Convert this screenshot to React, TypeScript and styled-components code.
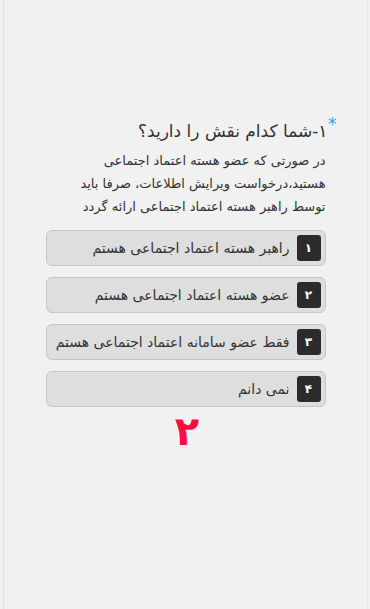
import styled, { createGlobalStyle } from 'styled-components';

const GlobalStyle = createGlobalStyle`
  html, body {
    margin: 0;
    padding: 0;
    background: #f1f1f1;
  }
  body {
    font-family: "DejaVu Sans", "Noto Sans", sans-serif;
  }
`;

const Frame = styled.div`
  box-sizing: border-box;
  margin: 0 2px 0 3px;
  min-height: 609px;
  border-left: 1px solid #e2e2e2;
  border-right: 1px solid #e8e8e8;
  background: #f1f1f1;
  display: flex;
  justify-content: center;
`;

const Question = styled.div`
  direction: rtl;
  width: 280px;
  padding-top: 118px;
  display: flex;
  flex-direction: column;
`;

const Title = styled.h2`
  position: relative;
  margin: 0 -2px 0 0;
  font-size: 17px;
  font-weight: normal;
  color: #333;
  line-height: 26px;
`;

const Required = styled.span`
  position: absolute;
  right: -9px;
  top: -7px;
  color: #2aa7dc;
  font-size: 17px;
`;

const Description = styled.p`
  margin: 5px 0 0 0;
  font-size: 13px;
  line-height: 23px;
  color: #333;
`;

const Options = styled.div`
  margin-top: 12px;
  display: flex;
  flex-direction: column;
  gap: 11px;
`;

const Option = styled.button`
  direction: rtl;
  box-sizing: border-box;
  height: 36px;
  display: flex;
  align-items: center;
  gap: 7px;
  padding: 0 4px 0 8px;
  background: #dedede;
  border: 1px solid #c6c6c6;
  border-radius: 6px;
  font-family: inherit;
  font-size: 14px;
  color: #333;
  text-align: right;
  cursor: pointer;
`;

const Badge = styled.span`
  flex: none;
  width: 24px;
  height: 26px;
  border-radius: 3px;
  background: #2b2b2b;
  color: #fff;
  font-size: 12px;
  font-weight: bold;
  display: flex;
  align-items: center;
  justify-content: center;
`;

const Step = styled.div`
  margin-top: 0;
  text-align: center;
  color: #ff0a3c;
  font-size: 40px;
  font-weight: bold;
  line-height: 48px;
  padding-left: 3px;
`;

const options = [
  { key: '۱', label: 'راهبر هسته اعتماد اجتماعی هستم' },
  { key: '۲', label: 'عضو هسته اعتماد اجتماعی هستم' },
  { key: '۳', label: 'فقط عضو سامانه اعتماد اجتماعی هستم' },
  { key: '۴', label: 'نمی دانم' },
];

const App = () => {
  return (
    <>
      <GlobalStyle />
      <Frame>
        <Question>
          <Title>
            <Required>*</Required>
            ۱-شما کدام نقش را دارید؟
          </Title>
          <Description>
            در صورتی که عضو هسته اعتماد اجتماعی
            <br />
            هستید،درخواست ویرایش اطلاعات، صرفا باید
            <br />
            توسط راهبر هسته اعتماد اجتماعی ارائه گردد
          </Description>
          <Options>
            {options.map((o) => (
              <Option key={o.key}>
                <Badge>{o.key}</Badge>
                {o.label}
              </Option>
            ))}
          </Options>
          <Step>۲</Step>
        </Question>
      </Frame>
    </>
  );
};

export default App;
